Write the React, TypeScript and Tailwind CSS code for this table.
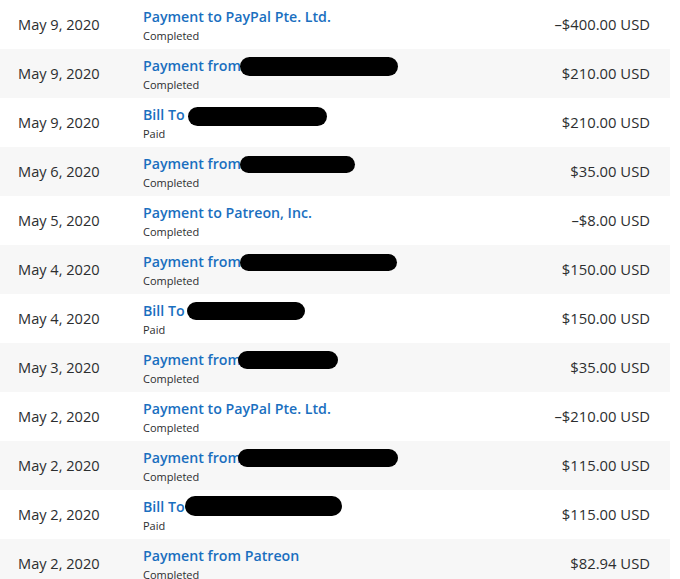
import React from "react";

type Row = {
  date: string;
  title: string;
  status: string;
  amount: string;
  blob?: { left: number; top: number; w: number; h: number };
};

const rows: Row[] = [
  { date: "May 9, 2020", title: "Payment to PayPal Pte. Ltd.", status: "Completed", amount: "–$400.00 USD" },
  { date: "May 9, 2020", title: "Payment from", status: "Completed", amount: "$210.00 USD", blob: { left: 240, top: 8, w: 158, h: 19 } },
  { date: "May 9, 2020", title: "Bill To", status: "Paid", amount: "$210.00 USD", blob: { left: 188, top: 9, w: 139, h: 19 } },
  { date: "May 6, 2020", title: "Payment from", status: "Completed", amount: "$35.00 USD", blob: { left: 240, top: 9, w: 115, h: 17 } },
  { date: "May 5, 2020", title: "Payment to Patreon, Inc.", status: "Completed", amount: "–$8.00 USD" },
  { date: "May 4, 2020", title: "Payment from", status: "Completed", amount: "$150.00 USD", blob: { left: 240, top: 9, w: 157, h: 17 } },
  { date: "May 4, 2020", title: "Bill To", status: "Paid", amount: "$150.00 USD", blob: { left: 187, top: 8, w: 118, h: 18 } },
  { date: "May 3, 2020", title: "Payment from", status: "Completed", amount: "$35.00 USD", blob: { left: 238, top: 8, w: 100, h: 18 } },
  { date: "May 2, 2020", title: "Payment to PayPal Pte. Ltd.", status: "Completed", amount: "–$210.00 USD" },
  { date: "May 2, 2020", title: "Payment from", status: "Completed", amount: "$115.00 USD", blob: { left: 238, top: 8, w: 160, h: 18 } },
  { date: "May 2, 2020", title: "Bill To", status: "Paid", amount: "$115.00 USD", blob: { left: 185, top: 6, w: 157, h: 20 } },
  { date: "May 2, 2020", title: "Payment from Patreon", status: "Completed", amount: "$82.94 USD" },
];

export default function App() {
  return (
    <div
      className="w-[680px] h-[579px] overflow-hidden bg-white"
      style={{ fontFamily: '"Open Sans", "Noto Sans", Arial, sans-serif' }}
    >
      <div className="w-[670px] flex flex-col">
        {rows.map((r, i) => (
          <div
            key={i}
            className={`relative flex items-center h-[49px] shrink-0 ${i % 2 === 1 ? "bg-[#f7f7f7]" : "bg-white"}`}
          >
            <div className="w-[143px] pl-[18px] text-[14.6px] text-[#2c2e2f]">{r.date}</div>
            <div className="flex-1 flex flex-col pt-[1px]">
              <div className="text-[14.2px] leading-[18px] font-semibold text-[#1a6fbf]">{r.title}</div>
              <div className="text-[11px] leading-[15px] mt-[2px] text-[#2c2e2f]">{r.status}</div>
            </div>
            <div className="pr-[20px] text-[14.8px] text-[#2c2e2f]">{r.amount}</div>
            {r.blob && (
              <span
                className="absolute bg-black rounded-full"
                style={{ left: r.blob.left, top: r.blob.top, width: r.blob.w, height: r.blob.h }}
              />
            )}
          </div>
        ))}
      </div>
    </div>
  );
}
